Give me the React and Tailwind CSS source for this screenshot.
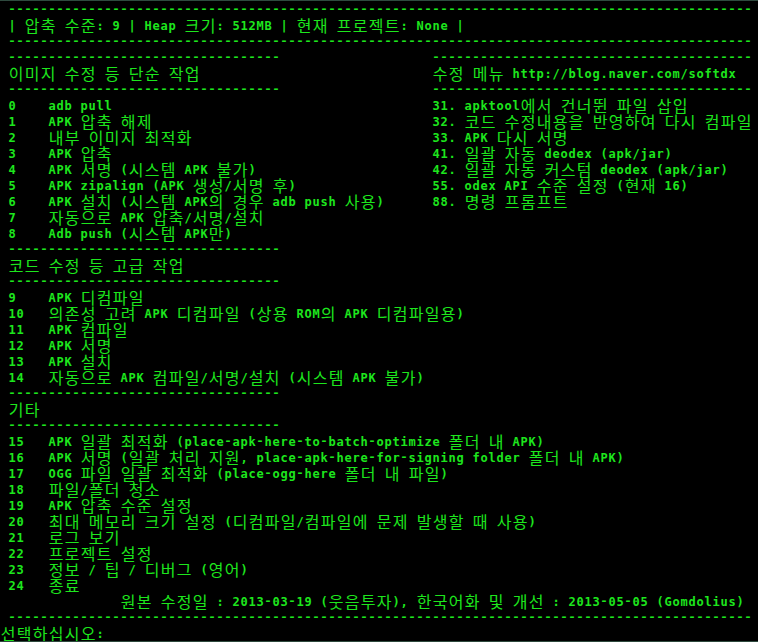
import React from 'react';

// console grid: 8px per half-width cell, 16px per row
const isWide = (ch) => ch.charCodeAt(0) >= 0x1100;

const Line = ({ text = '' }) => (
  <div className="flex h-4 whitespace-pre">
    {[...text].map((ch, i) => {
      if (ch === ' ') return <span key={i} className="w-2 shrink-0" />;
      if (ch === '-')
        return (
          <span key={i} className="w-2 shrink-0 overflow-hidden text-center font-['Liberation_Mono',monospace] font-bold text-[13.3px] leading-[17px]">
            -
          </span>
        );
      if (isWide(ch))
        return (
          <span key={i} className="w-4 shrink-0 text-center font-['Noto_Sans_CJK_KR',sans-serif] text-[16px] leading-4">
            {ch}
          </span>
        );
      return (
        <span key={i} className="w-2 shrink-0 text-center font-['DejaVu_Sans_Mono',monospace] font-bold text-[12px] leading-[18px]">
          {ch}
        </span>
      );
    })}
  </div>
);

const full = ' ' + '-'.repeat(93);
const half = ' ' + '-'.repeat(34);
const right = '-'.repeat(40);

const basic = [
  ' 0    adb pull',
  ' 1    APK 압축 해제',
  ' 2    내부 이미지 최적화',
  ' 3    APK 압축',
  ' 4    APK 서명 (시스템 APK 불가)',
  ' 5    APK zipalign (APK 생성/서명 후)',
  ' 6    APK 설치 (시스템 APK의 경우 adb push 사용)',
  ' 7    자동으로 APK 압축/서명/설치',
  ' 8    Adb push (시스템 APK만)',
];

const menu = [
  '31. apktool에서 건너뛴 파일 삽입',
  '32. 코드 수정내용을 반영하여 다시 컴파일',
  '33. APK 다시 서명',
  '41. 일괄 자동 deodex (apk/jar)',
  '42. 일괄 자동 커스텀 deodex (apk/jar)',
  '55. odex API 수준 설정 (현재 16)',
  '88. 명령 프롬프트',
];

const advanced = [
  ' 9    APK 디컴파일',
  ' 10   의존성 고려 APK 디컴파일 (상용 ROM의 APK 디컴파일용)',
  ' 11   APK 컴파일',
  ' 12   APK 서명',
  ' 13   APK 설치',
  ' 14   자동으로 APK 컴파일/서명/설치 (시스템 APK 불가)',
];

const misc = [
  ' 15   APK 일괄 최적화 (place-apk-here-to-batch-optimize 폴더 내 APK)',
  ' 16   APK 서명 (일괄 처리 지원, place-apk-here-for-signing folder 폴더 내 APK)',
  ' 17   OGG 파일 일괄 최적화 (place-ogg-here 폴더 내 파일)',
  ' 18   파일/폴더 청소',
  ' 19   APK 압축 수준 설정',
  ' 20   최대 메모리 크기 설정 (디컴파일/컴파일에 문제 발생할 때 사용)',
  ' 21   로그 보기',
  ' 22   프로젝트 설정',
  ' 23   정보 / 팁 / 디버그 (영어)',
  ' 24   종료',
];

export default function App() {
  return (
    <div className="w-[758px] h-[642px] overflow-hidden bg-black text-[#1de61d] border-t border-b border-[#2e4a3e]">
      <Line text={full} />
      <Line text=" | 압축 수준: 9 | Heap 크기: 512MB | 현재 프로젝트: None |" />
      <Line text={full} />

      <div className="flex">
        <div className="w-[432px] shrink-0">
          <Line text={half} />
          <Line text=" 이미지 수정 등 단순 작업" />
          <Line text={half} />
          {basic.map((t) => (
            <Line key={t} text={t} />
          ))}
        </div>
        <div className="flex-1">
          <Line text={right} />
          <Line text="수정 메뉴 http://blog.naver.com/softdx" />
          <Line text={right} />
          {menu.map((t) => (
            <Line key={t} text={t} />
          ))}
        </div>
      </div>

      <Line text={half} />
      <Line text=" 코드 수정 등 고급 작업" />
      <Line text={half} />
      {advanced.map((t) => (
        <Line key={t} text={t} />
      ))}

      <Line text={half} />
      <Line text=" 기타" />
      <Line text={half} />
      {misc.map((t) => (
        <Line key={t} text={t} />
      ))}

      <Line text="               원본 수정일 : 2013-03-19 (웃음투자), 한국어화 및 개선 : 2013-05-05 (Gomdolius)" />
      <Line text={full} />
      <Line text="선택하십시오:" />
    </div>
  );
}
